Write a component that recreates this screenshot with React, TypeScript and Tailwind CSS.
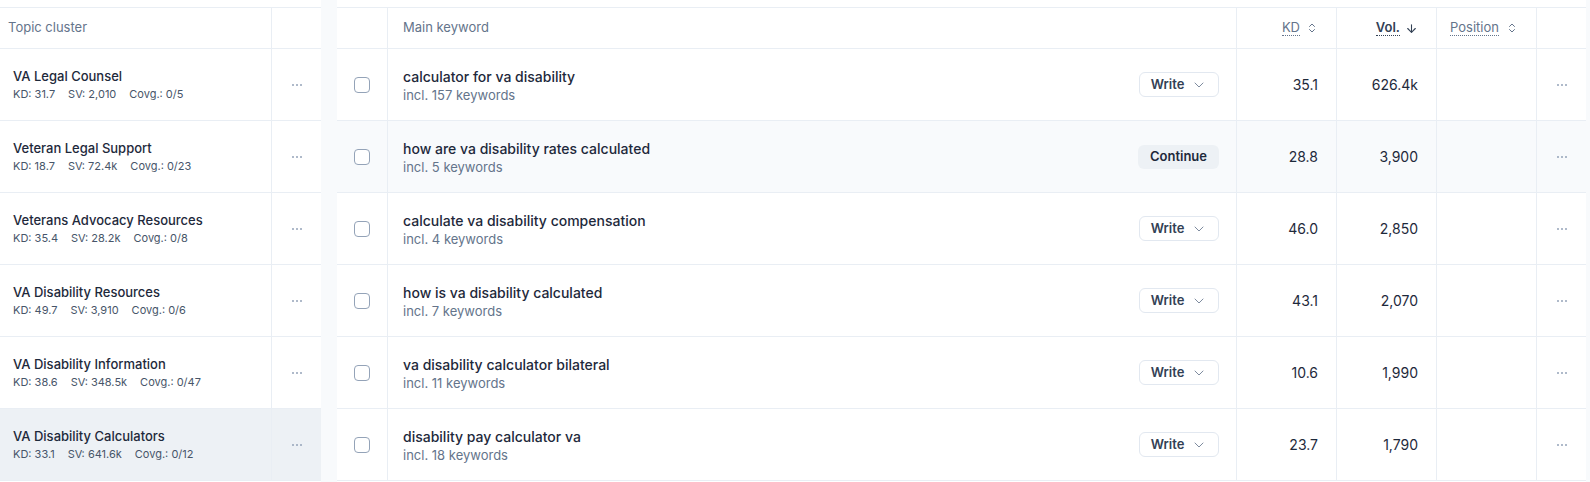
import React from "react";
import { ChevronDown, ChevronsUpDown, ArrowDown } from "lucide-react";

const clusters = [
  { name: "VA Legal Counsel", kd: "31.7", sv: "2,010", cov: "0/5" },
  { name: "Veteran Legal Support", kd: "18.7", sv: "72.4k", cov: "0/23" },
  { name: "Veterans Advocacy Resources", kd: "35.4", sv: "28.2k", cov: "0/8" },
  { name: "VA Disability Resources", kd: "49.7", sv: "3,910", cov: "0/6" },
  { name: "VA Disability Information", kd: "38.6", sv: "348.5k", cov: "0/47" },
  { name: "VA Disability Calculators", kd: "33.1", sv: "641.6k", cov: "0/12" },
];

const keywords = [
  { kw: "calculator for va disability", n: 157, kd: "35.1", vol: "626.4k", action: "write" },
  { kw: "how are va disability rates calculated", n: 5, kd: "28.8", vol: "3,900", action: "continue" },
  { kw: "calculate va disability compensation", n: 4, kd: "46.0", vol: "2,850", action: "write" },
  { kw: "how is va disability calculated", n: 7, kd: "43.1", vol: "2,070", action: "write" },
  { kw: "va disability calculator bilateral", n: 11, kd: "10.6", vol: "1,990", action: "write" },
  { kw: "disability pay calculator va", n: 18, kd: "23.7", vol: "1,790", action: "write" },
];

function Dots() {
  return (
    <div className="flex gap-[2px]">
      <span className="w-[2px] h-[2px] rounded-full bg-[#94a3b8]" />
      <span className="w-[2px] h-[2px] rounded-full bg-[#94a3b8]" />
      <span className="w-[2px] h-[2px] rounded-full bg-[#94a3b8]" />
    </div>
  );
}

export default function App() {
  return (
    <div className="w-[1590px] h-[482px] overflow-hidden bg-[#f8fafc] flex font-['Inter',sans-serif] text-[#1e293b]">
      {/* Left panel */}
      <div className="w-[321px] bg-white pt-[7px] flex flex-col">
        <div className="border-t border-[#e9eef4]">
          <div className="flex h-[41px] border-b border-[#e9eef4]">
            <div className="w-[272px] border-r border-[#e9eef4] flex items-center pl-[8px] text-[13px] text-[#64748b]">
              Topic cluster
            </div>
            <div className="flex-1" />
          </div>
          {clusters.map((c, i) => (
            <div
              key={c.name}
              className={`flex h-[72px] border-b border-[#e9eef4] ${i === clusters.length - 1 ? "bg-[#edf1f5]" : ""}`}
            >
              <div className="w-[272px] border-r border-[#e9eef4] flex flex-col justify-center pl-[13px]">
                <div className="text-[13px] font-medium leading-[18px] text-[#1e293b]">{c.name}</div>
                <div className="flex gap-[13px] text-[11px] leading-[18px] text-[#475569]">
                  <span>KD: {c.kd}</span>
                  <span>SV: {c.sv}</span>
                  <span>Covg.: {c.cov}</span>
                </div>
              </div>
              <div className="flex-1 flex items-center justify-center">
                <Dots />
              </div>
            </div>
          ))}
        </div>
      </div>

      <div className="w-[16px]" />

      {/* Right table */}
      <div className="w-[1249px] bg-white pt-[7px] flex flex-col">
        <div className="border-t border-[#e9eef4]">
          <div className="flex h-[41px] border-b border-[#e9eef4] text-[13px] text-[#64748b]">
            <div className="w-[51px] border-r border-[#e9eef4]" />
            <div className="w-[849px] border-r border-[#e9eef4] flex items-center pl-[15px]">Main keyword</div>
            <div className="w-[100px] border-r border-[#e9eef4] flex items-center justify-end pr-[18px] gap-[6px]">
              <span className="border-b border-dotted border-[#64748b] leading-[15px]">KD</span>
              <ChevronsUpDown size={12} strokeWidth={2} className="text-[#64748b]" />
            </div>
            <div className="w-[100px] border-r border-[#e9eef4] flex items-center justify-end pr-[18px] gap-[5px]">
              <span className="border-b border-dotted border-[#334155] leading-[15px] font-semibold text-[#334155]">Vol.</span>
              <ArrowDown size={13} strokeWidth={2} className="text-[#334155]" />
            </div>
            <div className="w-[100px] border-r border-[#e9eef4] flex items-center pl-[13px] gap-[7px]">
              <span className="border-b border-dotted border-[#64748b] leading-[15px]">Position</span>
              <ChevronsUpDown size={12} strokeWidth={2} className="text-[#64748b]" />
            </div>
            <div className="flex-1" />
          </div>
          {keywords.map((k, i) => (
            <div key={k.kw} className={`flex h-[72px] border-b border-[#e9eef4] ${i === 1 ? "bg-[#f8fafc]" : ""}`}>
              <div className="w-[51px] border-r border-[#e9eef4] flex items-center justify-center">
                <div className="w-[16px] h-[16px] rounded-[4px] border border-[#94a3b8] bg-white" />
              </div>
              <div className="w-[849px] border-r border-[#e9eef4] flex items-center justify-between pl-[15px] pr-[17px]">
                <div className="flex flex-col pt-[1px]">
                  <div className="text-[14px] font-medium leading-[19px] text-[#1e293b]">{k.kw}</div>
                  <div className="text-[13px] leading-[18px] text-[#64748b]">incl. {k.n} keywords</div>
                </div>
                {k.action === "write" ? (
                  <div className="w-[80px] h-[25px] rounded-[6px] border border-[#e2e8f0] bg-white flex items-center justify-center gap-[7px] text-[13px] font-semibold text-[#334155]">
                    <span>Write</span>
                    <ChevronDown size={16} strokeWidth={1.25} className="text-[#64748b]" />
                  </div>
                ) : (
                  <div className="w-[81px] h-[24px] rounded-[6px] bg-[#edf1f5] flex items-center justify-center text-[13px] font-semibold text-[#1e293b]">
                    Continue
                  </div>
                )}
              </div>
              <div className="w-[100px] border-r border-[#e9eef4] flex items-center justify-end pr-[18px] text-[14px] text-[#1e293b]">
                {k.kd}
              </div>
              <div className="w-[100px] border-r border-[#e9eef4] flex items-center justify-end pr-[18px] text-[14px] text-[#1e293b]">
                {k.vol}
              </div>
              <div className="w-[100px] border-r border-[#e9eef4]" />
              <div className="flex-1 flex items-center justify-center">
                <Dots />
              </div>
            </div>
          ))}
        </div>
      </div>
    </div>
  );
}
